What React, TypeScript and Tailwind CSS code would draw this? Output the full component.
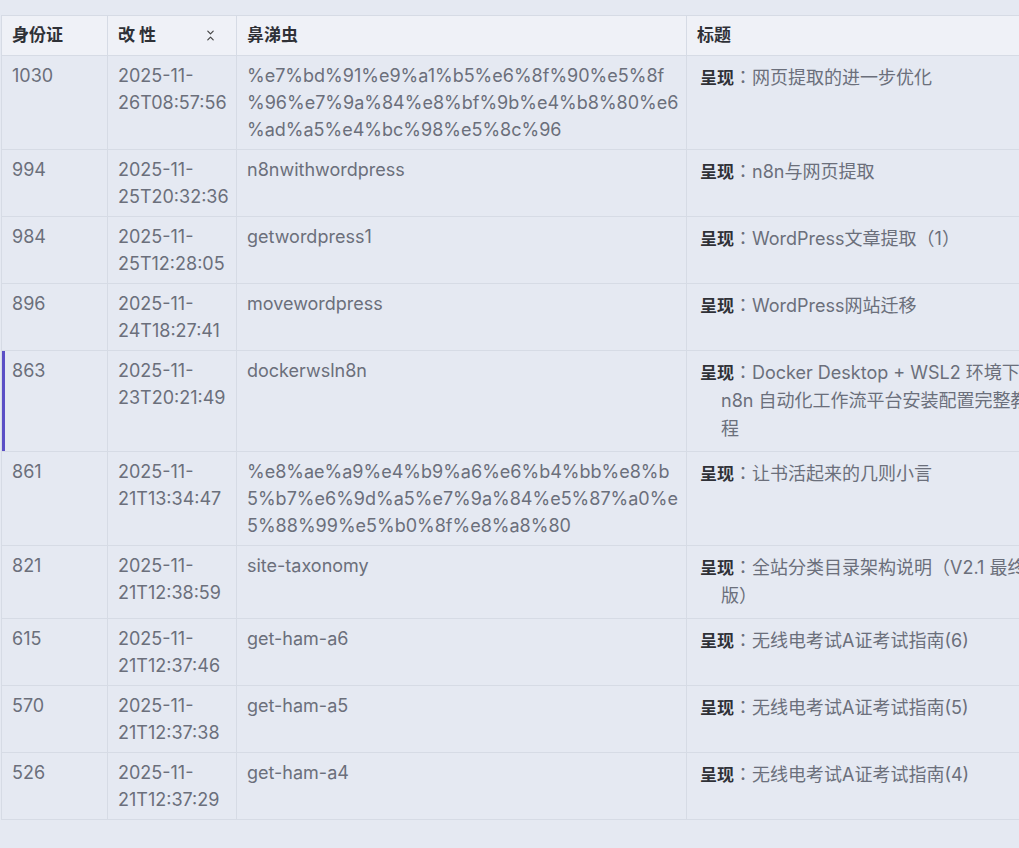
import { ChevronsDownUp } from 'lucide-react';

const rows = [
  { id: '1030', date: '2025-11-26T08:57:56', slug: '%e7%bd%91%e9%a1%b5%e6%8f%90%e5%8f%96%e7%9a%84%e8%bf%9b%e4%b8%80%e6%ad%a5%e4%bc%98%e5%8c%96', title: '网页提取的进一步优化' },
  { id: '994', date: '2025-11-25T20:32:36', slug: 'n8nwithwordpress', title: 'n8n与网页提取' },
  { id: '984', date: '2025-11-25T12:28:05', slug: 'getwordpress1', title: 'WordPress文章提取（1）' },
  { id: '896', date: '2025-11-24T18:27:41', slug: 'movewordpress', title: 'WordPress网站迁移' },
  { id: '863', date: '2025-11-23T20:21:49', slug: 'dockerwsln8n', title: 'Docker Desktop + WSL2 环境下 n8n 自动化工作流平台安装配置完整教程', active: true },
  { id: '861', date: '2025-11-21T13:34:47', slug: '%e8%ae%a9%e4%b9%a6%e6%b4%bb%e8%b5%b7%e6%9d%a5%e7%9a%84%e5%87%a0%e5%88%99%e5%b0%8f%e8%a8%80', title: '让书活起来的几则小言' },
  { id: '821', date: '2025-11-21T12:38:59', slug: 'site-taxonomy', title: '全站分类目录架构说明（V2.1 最终版）' },
  { id: '615', date: '2025-11-21T12:37:46', slug: 'get-ham-a6', title: '无线电考试A证考试指南(6)' },
  { id: '570', date: '2025-11-21T12:37:38', slug: 'get-ham-a5', title: '无线电考试A证考试指南(5)' },
  { id: '526', date: '2025-11-21T12:37:29', slug: 'get-ham-a4', title: '无线电考试A证考试指南(4)' },
];

const cell = 'border border-[#d6dbe5] px-[10px]';

export default function App() {
  return (
    <div
      className="min-h-[848px] w-[1019px] overflow-hidden bg-[#e5e9f2] pt-[15px] pl-px"
      style={{ fontFamily: 'Inter, "Noto Sans CJK JP", sans-serif' }}
    >
      <table className="w-[1050px] table-fixed border-collapse text-[18px] leading-[27px] text-[#6b6f7b]">
        <colgroup>
          <col className="w-[106px]" />
          <col className="w-[129px]" />
          <col className="w-[450px]" />
          <col className="w-[365px]" />
        </colgroup>
        <thead>
          <tr className="h-[40px] bg-[#eff1f7] text-left text-[17px] font-bold text-[#2f3137]">
            <th className={cell}>身份证</th>
            <th className={cell}>
              <div className="flex items-center justify-between">
                <span>改 性</span>
                <ChevronsDownUp className="mr-[9px] h-[13px] w-[13px] text-[#444]" strokeWidth={2.2} />
              </div>
            </th>
            <th className={cell}>鼻涕虫</th>
            <th className={cell}>标题</th>
          </tr>
        </thead>
        <tbody>
          {rows.map((row) => (
            <tr key={row.id} className="align-top">
              <td
                className={
                  row.active
                    ? `${cell} py-[6px] shadow-[inset_3px_0_0_#5b4fc6]`
                    : `${cell} py-[6px]`
                }
              >
                {row.id}
              </td>
              <td className={`${cell} py-[6px]`}>
                {row.date.slice(0, 8)}
                <br />
                {row.date.slice(8)}
              </td>
              <td className="border border-[#d6dbe5] pl-[10px] pr-[6px] py-[6px] [overflow-wrap:anywhere]">{row.slug}</td>
              <td className="border border-[#d6dbe5] pl-[13px] pr-[10px] py-[6px]">
                <div className="my-[2px] pl-[21px] -indent-[21px] leading-[28px]">
                  <b className="text-[17px] font-bold text-[#2f3137]">呈现</b>：{row.title}
                </div>
              </td>
            </tr>
          ))}
        </tbody>
      </table>
    </div>
  );
}
